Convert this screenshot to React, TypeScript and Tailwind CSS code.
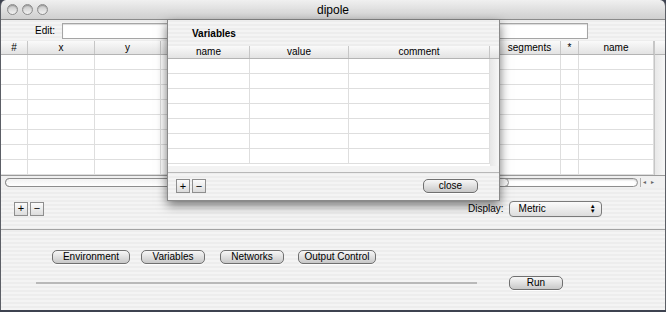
import React from 'react';

const pinstripe =
  'bg-[repeating-linear-gradient(180deg,#ededed_0px,#ededed_2px,#f4f4f4_2px,#f4f4f4_4px)]';

// columns between "y" and "segments" sit under the sheet, so their headers stay blank
const mainCols = [
  { key: 'n', name: '#', w: 'w-[27px]' },
  { key: 'x', name: 'x', w: 'w-[67px]' },
  { key: 'y', name: 'y', w: 'w-[66px]' },
  { key: 'h1', name: '', w: 'w-[66px]' },
  { key: 'h2', name: '', w: 'w-[90px]' },
  { key: 'h3', name: '', w: 'w-[90px]' },
  { key: 'h4', name: '', w: 'w-[92px]' },
  { key: 'seg', name: 'segments', w: 'w-[62px]' },
  { key: 'star', name: '*', w: 'w-[18px]' },
  { key: 'name', name: 'name', w: 'w-[75px]' },
];

const sheetCols = [
  { name: 'name', w: 'w-[82px]' },
  { name: 'value', w: 'w-[99px]' },
  { name: 'comment', w: 'w-[141px]' },
];

function AquaButton({ label, className = '' }: { label: string; className?: string }) {
  return (
    <div
      className={`flex h-[14px] items-center justify-center rounded-[5px] border border-[#707070] bg-linear-to-b from-[#f7f7f7] via-[#e0e0e0] to-[#c8c8c8] text-[10px] leading-none whitespace-nowrap text-black shadow-[0_1px_0_rgba(255,255,255,0.9)] ${className}`}
    >
      {label}
    </div>
  );
}

function SquareButton({ label }: { label: string }) {
  return (
    <div className="flex h-[14px] w-[14px] items-center justify-center border border-[#8e8e8e] bg-linear-to-b from-[#fbfbfb] to-[#dcdcdc] text-[11px] leading-none text-black">
      {label}
    </div>
  );
}

function TrafficLight() {
  return (
    <div className="h-[11px] w-[11px] rounded-full border border-[#8c8c8c] bg-linear-to-b from-[#c4c4c4] via-[#dcdcdc] to-[#f2f2f2] shadow-[inset_0_1px_1px_rgba(0,0,0,0.25)]" />
  );
}

function MainTable() {
  const rows = Array.from({ length: 8 });
  return (
    <div className="flex border-b border-[#9a9a9a]">
      <div className="flex flex-col">
        <div className="flex h-[14px] border-b border-[#b4b4b4] bg-linear-to-b from-[#fafafa] to-[#e3e3e3]">
          {mainCols.map((c) => (
            <div
              key={c.key}
              className={`${c.w} flex items-center justify-center border-r border-[#c6c6c6] text-[10px] leading-none text-black`}
            >
              {c.name}
            </div>
          ))}
        </div>
        {rows.map((_, i) => (
          <div key={i} className="flex h-[15px] border-b border-[#dedede] bg-white">
            {mainCols.map((c) => (
              <div key={c.key} className={`${c.w} border-r border-[#dedede]`} />
            ))}
          </div>
        ))}
      </div>
      <div className="flex flex-1 flex-col border-l border-[#c6c6c6]">
        <div className="h-[14px] border-b border-[#b4b4b4] bg-linear-to-b from-[#fafafa] to-[#e3e3e3]" />
        <div className="flex-1 bg-linear-to-r from-[#e8e8e8] to-[#f6f6f6]" />
      </div>
    </div>
  );
}

function ScrollBar() {
  return (
    <div className="flex h-[12px] items-center bg-[#f0f0f0] pl-[4px]">
      <div className="relative h-[9px] w-[633px] rounded-full border border-[#8d8d8d] bg-white shadow-[inset_0_1px_2px_rgba(0,0,0,0.2)]">
        <div className="absolute top-[-1px] left-[-1px] h-[9px] w-[504px] rounded-full border border-[#8d8d8d] bg-linear-to-b from-[#f2f2f2] to-[#ffffff]" />
      </div>
      <div className="ml-[2px] flex h-[9px] w-[16px] items-center justify-around border-l border-[#b0b0b0] text-[6px] leading-none text-[#666]">
        <span>◂</span>
        <span>▸</span>
      </div>
    </div>
  );
}

function VariablesSheet() {
  const rows = Array.from({ length: 7 });
  return (
    <div
      className={`absolute top-[20px] left-[166px] flex h-[181px] w-[333px] flex-col border-x border-b border-[#8a8a8a] ${pinstripe} shadow-[0_4px_10px_rgba(0,0,0,0.55)]`}
    >
      <div className="flex h-[26px] items-center pl-[24px] text-[10px] font-bold text-black">
        Variables
      </div>
      <div className="flex">
        <div className="flex flex-col">
          <div className="flex h-[13px] border-b border-[#b4b4b4] bg-linear-to-b from-[#fafafa] to-[#e3e3e3]">
            {sheetCols.map((c) => (
              <div
                key={c.name}
                className={`${c.w} flex items-center justify-center border-r border-[#c6c6c6] text-[10px] leading-none text-black`}
              >
                {c.name}
              </div>
            ))}
          </div>
          {rows.map((_, i) => (
            <div key={i} className="flex h-[15px] border-b border-[#dedede] bg-white">
              {sheetCols.map((c) => (
                <div key={c.name} className={`${c.w} border-r border-[#dedede]`} />
              ))}
            </div>
          ))}
          <div className="h-[2px] bg-white" />
        </div>
        <div className="flex flex-1 flex-col">
          <div className="h-[13px] border-b border-[#b4b4b4] bg-linear-to-b from-[#fafafa] to-[#e3e3e3]" />
          <div className="flex-1 bg-linear-to-r from-[#e6e6e6] to-[#f7f7f7]" />
        </div>
      </div>
      <div className="h-[7px] border-b border-[#b8b8b8] bg-[#f3f3f3]" />
      <div className="flex h-[26px] items-center pl-[8px]">
        <SquareButton label="+" />
        <div className="ml-[2px]">
          <SquareButton label="−" />
        </div>
        <AquaButton label="close" className="ml-[217px] w-[55px]" />
      </div>
    </div>
  );
}

export default function App() {
  return (
    <div className="h-[312px] w-[666px] overflow-hidden bg-[#3e4350] font-['Lucida_Grande','Liberation_Sans',Arial,sans-serif]">
      <div className="relative flex h-[310px] w-[666px] flex-col overflow-hidden rounded-t-[6px] border-x border-[#5c5f66]">
        {/* title bar */}
        <div className="relative flex h-[20px] items-center border-b border-[#8a8a8a] bg-linear-to-b from-[#f0f0f0] to-[#cfcfcf] pl-[6px]">
          <div className="flex gap-[4px]">
            <TrafficLight />
            <TrafficLight />
            <TrafficLight />
          </div>
          <div className="absolute inset-x-0 top-0 flex h-[20px] items-center justify-center text-[12px] text-black">
            dipole
          </div>
        </div>

        {/* top panel */}
        <div className={`flex flex-col ${pinstripe}`}>
          <div className="flex h-[21px] items-center">
            <span className="w-[54px] text-right text-[10px] text-black">Edit:</span>
            <div className="ml-[7px] h-[16px] w-[526px] border border-[#a5a5a5] bg-white shadow-[inset_0_1px_1px_rgba(0,0,0,0.15)]" />
          </div>
          <MainTable />
          <ScrollBar />
          <div className="flex h-[41px] items-center pl-[13px]">
            <SquareButton label="+" />
            <div className="ml-[2px]">
              <SquareButton label="−" />
            </div>
            <span className="ml-[424px] text-[10px] text-black">Display:</span>
            <div className="ml-[5px] flex h-[16px] w-[93px] items-center justify-between rounded-[4px] border border-[#7a7a7a] bg-linear-to-b from-[#fbfbfb] to-[#dddddd] pr-[5px] pl-[9px] text-[10px] leading-none text-black">
              <span>Metric</span>
              <span className="flex flex-col text-[6px] leading-[5px]">
                <span>▲</span>
                <span>▼</span>
              </span>
            </div>
          </div>
        </div>

        {/* separator */}
        <div className="h-[1px] bg-[#a3a3a3]" />

        {/* lower panel */}
        <div className={`flex flex-1 flex-col ${pinstripe} pt-[20px]`}>
          <div className="flex items-center pl-[51px]">
            <AquaButton label="Environment" className="w-[78px]" />
            <AquaButton label="Variables" className="ml-[11px] w-[64px]" />
            <AquaButton label="Networks" className="ml-[15px] w-[64px]" />
            <AquaButton label="Output Control" className="ml-[14px] w-[78px]" />
          </div>
          <div className="mt-[12px] flex items-center pl-[35px]">
            <div className="h-[2px] w-[441px] bg-[#b9b9b9]" />
            <AquaButton label="Run" className="ml-[32px] w-[54px]" />
          </div>
        </div>

        <VariablesSheet />
      </div>
    </div>
  );
}
